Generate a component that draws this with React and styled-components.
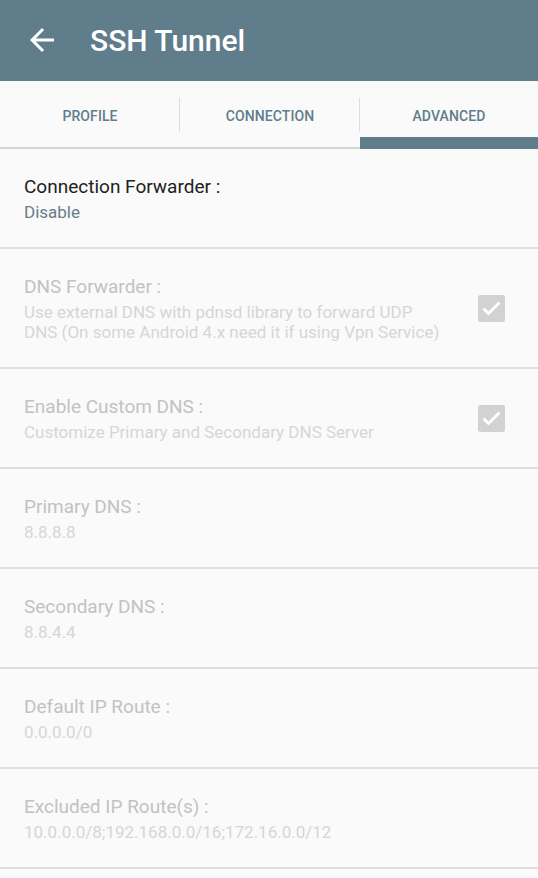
import React from "react";
import styled, { createGlobalStyle } from "styled-components";

const GlobalStyle = createGlobalStyle`
  html, body { margin: 0; padding: 0; background: #fafafa; }
  body { font-family: Roboto, "Noto Sans", "Liberation Sans", sans-serif; -webkit-font-smoothing: antialiased; }
  * { box-sizing: border-box; }
`;

const Screen = styled.div`
  width: 538px;
  min-height: 878px;
  background: #fafafa;
  display: flex;
  flex-direction: column;
`;

const AppBar = styled.header`
  height: 81px;
  background: #607d8b;
  display: flex;
  align-items: center;
  padding-left: 24px;
  gap: 30px;
`;

const BackButton = styled.button`
  width: 36px;
  height: 36px;
  padding: 0;
  border: 0;
  background: transparent;
  display: flex;
  margin-top: -2px;
  svg { display: block; }
`;

const Title = styled.h1`
  margin: 0;
  font-size: 30px;
  font-weight: 500;
  color: #ffffff;
  line-height: 36px;
  letter-spacing: 0;
`;

const TabBar = styled.nav`
  height: 68px;
  display: grid;
  grid-template-columns: 180px 180px 1fr;
  border-bottom: 2px solid #d6d6d6;
  background: #fafafa;
`;

const Tab = styled.div`
  position: relative;
  display: flex;
  justify-content: center;
  padding-top: 27px;
  font-size: 14px;
  line-height: 16px;
  font-weight: 500;
  color: #607d8b;
  letter-spacing: 0.1px;

  &:not(:last-child)::after {
    content: "";
    position: absolute;
    right: 0;
    top: 17px;
    width: 1px;
    height: 34px;
    background: #dddddd;
  }

  ${(p) =>
    p.$active &&
    `
    &::before {
      content: "";
      position: absolute;
      left: 0;
      right: 0;
      bottom: -2px;
      height: 12px;
      background: #607d8b;
    }
  `}
`;

const List = styled.div`
  display: flex;
  flex-direction: column;
`;

const Row = styled.div`
  display: flex;
  align-items: center;
  padding: 26px 33px 25px 24px;
  border-bottom: 2px solid #dedede;
`;

const RowText = styled.div`
  width: 422px;
  display: flex;
  flex-direction: column;
`;

const RowTitle = styled.div`
  font-size: 19px;
  line-height: 24px;
  color: ${(p) => (p.$disabled ? "#c2c2c2" : "#212121")};
`;

const RowSummary = styled.div`
  margin-top: 3px;
  font-size: 17px;
  line-height: 20px;
  color: ${(p) => (p.$disabled ? "#d6d6d6" : "#687d89")};
`;

const CheckSlot = styled.div`
  margin-left: auto;
  width: 27px;
  height: 27px;
  svg { display: block; }
`;

const ArrowBack = () => (
  <svg width="36" height="36" viewBox="0 0 24 24" fill="#ffffff">
    <path d="M20 11H7.83l5.59-5.59L12 4l-8 8 8 8 1.41-1.41L7.83 13H20v-2z" />
  </svg>
);

const DisabledCheck = () => (
  <svg width="27" height="27" viewBox="0 0 27 27">
    <rect x="0" y="0" width="27" height="27" rx="2.5" fill="#d2d2d2" />
    <path d="M5.5 13.5l5 5 11-11" fill="none" stroke="#ffffff" strokeWidth="2.8" />
  </svg>
);

const prefs = [
  { title: "Connection Forwarder :", summary: "Disable", disabled: false },
  {
    title: "DNS Forwarder :",
    summary:
      "Use external DNS with pdnsd library to forward UDP DNS (On some Android 4.x need it if using Vpn Service)",
    disabled: true,
    check: true,
  },
  {
    title: "Enable Custom DNS :",
    summary: "Customize Primary and Secondary DNS Server",
    disabled: true,
    check: true,
  },
  { title: "Primary DNS :", summary: "8.8.8.8", disabled: true },
  { title: "Secondary DNS :", summary: "8.8.4.4", disabled: true },
  { title: "Default IP Route :", summary: "0.0.0.0/0", disabled: true },
  {
    title: "Excluded IP Route(s) :",
    summary: "10.0.0.0/8;192.168.0.0/16;172.16.0.0/12",
    disabled: true,
  },
];

export default function App() {
  return (
    <>
      <GlobalStyle />
      <Screen>
        <AppBar>
          <BackButton aria-label="Back">
            <ArrowBack />
          </BackButton>
          <Title>SSH Tunnel</Title>
        </AppBar>
        <TabBar>
          <Tab>PROFILE</Tab>
          <Tab>CONNECTION</Tab>
          <Tab $active>ADVANCED</Tab>
        </TabBar>
        <List>
          {prefs.map((p) => (
            <Row key={p.title}>
              <RowText>
                <RowTitle $disabled={p.disabled}>{p.title}</RowTitle>
                <RowSummary $disabled={p.disabled}>{p.summary}</RowSummary>
              </RowText>
              {p.check && (
                <CheckSlot>
                  <DisabledCheck />
                </CheckSlot>
              )}
            </Row>
          ))}
        </List>
      </Screen>
    </>
  );
}
